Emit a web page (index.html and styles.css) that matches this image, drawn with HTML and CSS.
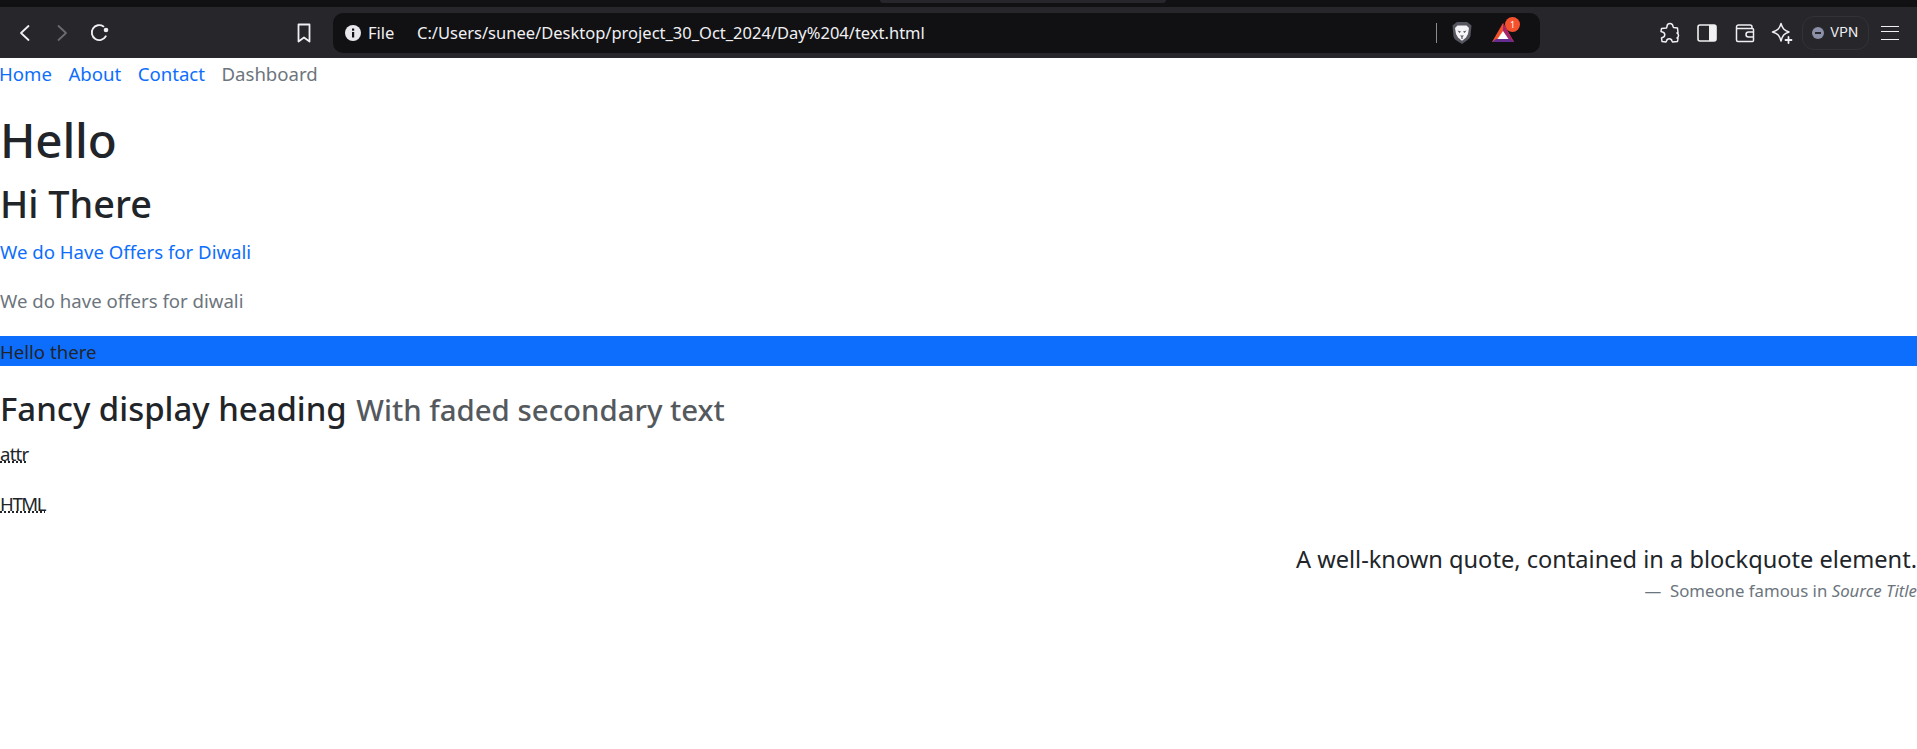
FILE: index.html
```html
<!DOCTYPE html>
<html lang="en">
<head>
<meta charset="utf-8">
<title>text.html</title>
<link rel="stylesheet" href="styles.css">
</head>
<body>
<header class="browser">
  <div class="tabstrip"><div class="tabedge"></div></div>
  <div class="toolbar">
    <div class="btn"><svg width="20" height="20" viewBox="0 0 20 20" class="ic"><path d="M13.500 3 6 10l7.500 7"/></svg></div>
    <div class="btn dim"><svg width="20" height="20" viewBox="0 0 20 20" class="ic"><path d="M6.500 3 14 10l-7.500 7"/></svg></div>
    <div class="btn"><svg width="20" height="20" viewBox="0 0 20 20" class="ic"><path d="M15.800 13.300A7.500 7.500 0 1 1 13.500 3.400"/><circle cx="16" cy="7" r="2.300" class="fill"/></svg></div>
    <div class="btn bookmark"><svg width="20" height="22" viewBox="0 0 20 22" class="ic"><path d="M4.500 2.500h11v17L10 15.500l-5.500 4z"/></svg></div>
    <div class="urlbar">
      <svg width="16" height="16" viewBox="0 0 16 16" class="info"><circle cx="8" cy="8" r="8" fill="#e8e8ec"/><rect x="7" y="7" width="2.200" height="5.500" fill="#111114"/><rect x="7" y="3.500" width="2.200" height="2.200" fill="#111114"/></svg>
      <span class="scheme">File</span>
      <span class="url">C:/Users/sunee/Desktop/project_30_Oct_2024/Day%204/text.html</span>
      <span class="sep"></span>
      <svg width="22" height="24" viewBox="0 0 22 24" class="lion"><path d="M6 1h10l2 1.500 2.500 2-1 10.500q-.5 2.500-3 4L11 23l-5.500-3.500q-2.500-1.500-3-4L1.500 4.500 4 2.500z" fill="#55565f"/><path d="M6.500 4.500h9l2.500 2.500-1 6-2 3.500-3.500 3h-1L7 16.500l-2-3.500-1-6z" fill="#f4f4f6"/><path d="M6.500 9.500l3.500 1-1.500 1.500zM15.500 9.500l-3.500 1 1.500 1.500zM9 14.500h4L11 16.500zM10.400 16h1.200v2h-1.200z" fill="#55565f"/></svg>
      <div class="bat">
        <svg width="24" height="20" viewBox="0 0 24 20"><path d="M12 0 23 19H1z" fill="#f0502a"/><path d="M12 0 23 19h-5L12 8z" fill="#a8246a"/><path d="M1 19l4-3h14l4 3z" fill="#662d91"/><path d="M12 8l5.500 8h-11z" fill="#fff"/></svg>
        <span class="badge">1</span>
      </div>
    </div>
    <div class="btn gapped"><svg width="22" height="22" viewBox="0 0 22 22" class="ic thin"><path d="M8 4.500a3 3 0 0 1 6 0l.500 1 4 .500.500 4.500-1 .500a2.800 2.800 0 0 1 0 5l1 .500-.500 3-5 .500-.500-1a2.800 2.800 0 0 0-5.500 0l-.500 1-4-.500-.500-3.500 1-.500a2.800 2.800 0 0 0 0-5.500L2 9.500 2.500 6.500 7.500 6z"/></svg></div>
    <div class="btn"><svg width="20" height="18" viewBox="0 0 20 18"><rect x="1" y="1" width="18" height="16" rx="2" fill="none" stroke="#f0f0f2" stroke-width="1.600"/><rect x="12" y="1" width="7" height="16" fill="#f0f0f2"/></svg></div>
    <div class="btn"><svg width="20" height="20" viewBox="0 0 20 20" class="ic thin"><path d="M17 5.500V4a2 2 0 0 0-2-2H3.500A2 2 0 0 0 1.500 4v13a1.500 1.500 0 0 0 1.500 1.500h14.500a1 1 0 0 0 1-1v-11a1 1 0 0 0-1-1H1.500M18.500 9H13.500a2 2 0 0 0 0 5h5"/></svg></div>
    <div class="btn"><svg width="22" height="22" viewBox="0 0 22 22" class="ic thin"><path d="M10 1.500c1.500 5 3 7 8 8.500-5 1.500-6.500 3.500-8 9-1.500-5.500-3-7.500-8.500-9C7 8.500 8.500 6.500 10 1.500z"/><path d="M17.500 15v6M14.500 18h6" class="plus"/></svg></div>
    <div class="vpn"><span class="vpndot"></span><span class="vpntext">VPN</span></div>
    <div class="btn menu"><span class="bars"></span></div>
  </div>
</header>

<nav class="nav">
  <a class="nav-link" href="#">Home</a>
  <a class="nav-link" href="#">About</a>
  <a class="nav-link" href="#">Contact</a>
  <a class="nav-link muted" href="#">Dashboard</a>
</nav>

<main>
  <h1 class="h-one">Hello</h1>
  <h2 class="h-two">Hi There</h2>
  <p class="para primary">We do Have Offers for Diwali</p>
  <p class="para muted">We do have offers for diwali</p>
  <p class="para band">Hello there</p>
  <h3 class="h-three">Fancy display heading <small class="faded">With faded secondary text</small></h3>
  <p class="note"><abbr class="abbr">attr</abbr></p>
  <p class="note"><abbr class="abbr caps">HTML</abbr></p>
  <figure class="figure">
    <blockquote class="quote">A well-known quote, contained in a blockquote element.</blockquote>
    <figcaption class="caption">— &nbsp;Someone famous in <cite class="cite">Source Title</cite></figcaption>
  </figure>
</main>
</body>
</html>
```
FILE: styles.css
```css
* { box-sizing: border-box; }
html, body { margin: 0; padding: 0; }
body {
  background: #fff;
  color: #212529;
  font-family: "Noto Sans", "Open Sans", sans-serif;
  font-size: 18.6px;
  line-height: 29px;
  height: 749px;
  overflow: hidden;
}
.browser { height: 58px; background: #111114; display: flex; flex-direction: column; }
.tabstrip { height: 7px; position: relative; display: flex; justify-content: center; }
.tabedge { width: 286px; height: 3px; background: #26262b; border-radius: 0 0 6px 6px; margin-left: 128px; }
.toolbar { height: 51px; background: #26262b; display: flex; align-items: center; padding: 0 12px 0 6px; color: #f0f0f2; }
.btn { width: 37.500px; height: 38px; display: flex; align-items: center; justify-content: center; flex: none; }
.ic { fill: none; stroke: #f0f0f2; stroke-width: 1.800; stroke-linecap: round; stroke-linejoin: round; }
.ic.thin { stroke-width: 1.500; }
.ic .fill { fill: #f0f0f2; stroke: none; }
.dim .ic { stroke: #6b6b70; }
.bookmark { margin-left: 167px; margin-right: 10px; }
.urlbar {
  width: 1207px; height: 40px; background: #111114; border-radius: 10px;
  display: flex; align-items: center; padding-left: 12px; flex: none;
  font-size: 16.500px; line-height: 20px;
}
.info { flex: none; margin-top: 1px; }
.scheme { margin-left: 7px; width: 49px; color: #f0f0f2; }
.url { color: #f0f0f2; white-space: nowrap; width: 1019px; flex: none; }
.sep { width: 1px; height: 20px; background: #8a8a90; flex: none; }
.lion { margin-left: 14px; flex: none; }
.bat { position: relative; margin-left: 18px; width: 24px; height: 20px; }
.bat svg { display: block; }
.badge {
  position: absolute; left: 14px; top: -6px; width: 15px; height: 15px; border-radius: 50%;
  background: #f4512c; color: #fff; font-size: 9px; line-height: 15px; text-align: center;
}
.gapped { margin-left: 111px; }
.plus { stroke-width: 1.800; }
.vpn {
  width: 67px; height: 34px; margin-left: 1px; border: 1px solid #323238; border-radius: 12px;
  display: flex; align-items: center; padding-left: 9px; font-family: Inter, sans-serif; font-size: 13.500px;
  flex: none;
}
.vpndot { width: 12px; height: 12px; border-radius: 50%; background: #8b8fa8; position: relative; margin-right: 6px; }
.vpndot::after { content: ""; position: absolute; left: 3px; right: 3px; top: 5px; height: 2px; background: #26262b; }
.vpntext { color: #f0f0f2; }
.menu { margin-left: 2px; }
.bars { width: 18px; height: 14px; border-top: 1.500px solid #f0f0f2; border-bottom: 1.500px solid #f0f0f2; position: relative; display: block; }
.bars::after { content: ""; position: absolute; left: 0; right: 0; top: 4px; height: 1.500px; background: #f0f0f2; }

.nav { display: flex; gap: 16.500px; height: 53px; padding-top: 1px; margin-left: -1px; }
.nav-link { color: #0d6efd; text-decoration: none; }
.nav-link.muted, .muted { color: #6c757d; }
.h-one { margin: 0 0 12px; font-size: 47.500px; line-height: 57.600px; font-weight: 500; letter-spacing: -0.2px; }
.h-two { margin: 0 0 10.200px; font-size: 37.800px; line-height: 46px; font-weight: 500; }
.para { margin: 0 0 20.600px; }
.primary { color: #0d6efd; }
.band { background: #0d6efd; height: 30px; padding-top: 1px; margin-bottom: 23.500px; }
.h-three { margin: 0 0 8.600px; font-size: 32.900px; line-height: 40px; font-weight: 500; }
.faded { font-size: 29.400px; color: #54595e; margin-left: 1px; }
.note { margin: 0 0 20.500px; }
.abbr { text-decoration: underline dotted; cursor: help; letter-spacing: -0.8px; }
.abbr.caps { letter-spacing: -1.400px; }
.figure { margin: 0; padding-top: 2.500px; text-align: right; }
.quote { margin: 0; font-size: 23.600px; line-height: 37px; }
.caption { font-size: 16.800px; line-height: 26px; color: #6c757d; }
.cite { font-style: italic; }
```
